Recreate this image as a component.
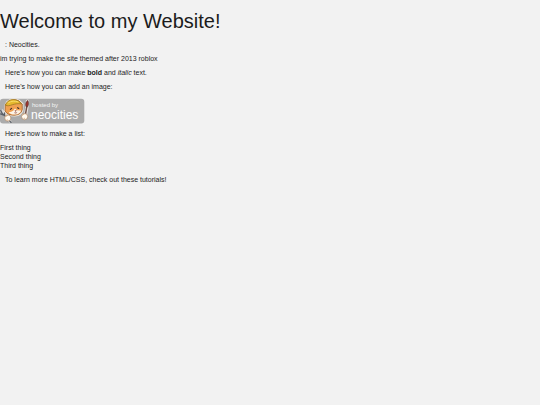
import type { ReactNode } from "react"

const things = ["First thing", "Second thing", "Third thing"]

function Paragraph({ children }: { children: ReactNode }) {
  return <p className="mb-[5px] px-[5px]">{children}</p>
}

function Badge() {
  return (
    <svg viewBox="0 0 85 26" className="block w-[85px] h-[26px]" role="img" aria-label="Hosted by Neocities">
      <rect x="0" y="0.8" width="84.3" height="24.8" rx="3" fill="#ababab" />

      {/* fork */}
      <path d="M1.5 12l4 5 5 7" fill="none" stroke="#d8d8d8" strokeWidth="3" strokeLinejoin="round" />
      <path d="M.8 12.5l1.6 3.2 2 1.2L5.2 13m-4.6 3l3.8 1.4L11 24.4" fill="none" stroke="#5b6067" strokeWidth="1.3" strokeLinecap="round" />

      {/* brush */}
      <path d="M27.5 3.2l-.8 7-1.2 7" fill="none" stroke="#e6dedc" strokeWidth="3.4" strokeLinecap="round" />
      <path d="M26.8 8.6l-1.4 8" fill="none" stroke="#705044" strokeWidth="1.4" />
      <path d="M26 8.6c-.7-2.9.1-5 1.8-6.1.9 2.1.8 4.4-.3 6.3z" fill="#a7352e" stroke="#4c2b27" strokeWidth=".7" />

      {/* head */}
      <path
        d="M4.6 13.2L5 7l2-3.4C10.5.8 16 .3 19.5 2.6l3.4 3.1-.1 6.3c-.9 3.9-3.9 5.7-8 5.8-5.3 0-8.8-1.6-10.2-4.6z"
        fill="#f0a050"
        stroke="#f4ede2"
        strokeWidth="1.2"
        strokeLinejoin="round"
      />
      <path
        d="M5 12.8L5.3 6.5l2.6-2.3C11 1.5 15.5 1 19 3.1l3.2 2.9.1 5.6c-.8 3.6-3.5 5.4-7.6 5.6-4.8.2-8.1-1.2-9.7-4.4z"
        fill="#f0a050"
        stroke="#8c562c"
        strokeWidth=".7"
      />
      <path d="M8.8 14.2c1.7 0 3.1-.8 4.4-1.4l1.8-2.2 1.6 1.6 4.5.4c-.4 2.4-2.6 3.9-5.8 4-3.2.1-5.5-.5-6.5-2.4z" fill="#fff4e6" />
      <path d="M5.4 7.2C7 3 10.2 1.4 13.8 1.6c3.2.2 5.9 1.6 7.6 4.3-3.4-.5-6.7 0-9.2.9-2.5.8-4.5 1.4-6.8.4z" fill="#e6b82e" stroke="#93701f" strokeWidth=".7" />
      <path d="M8.2 4.9c3.2-2 6.8-2.2 10.2-.9" fill="none" stroke="#f7dc66" strokeWidth="1" />
      <path d="M10.4 11.3l1.2-1m6-.6l1.2.8" stroke="#3e2b23" strokeWidth="1.1" strokeLinecap="round" />
      <path d="M14.8 12.7l1.5-.2-.6 1zM14.2 14.7c1.1.7 2.1.5 3-.3" fill="#ac4e41" stroke="#6e352c" strokeWidth=".4" />

      {/* paws */}
      <circle cx="7.8" cy="20" r="3.1" fill="#fffaf0" stroke="#a47a58" strokeWidth=".6" />
      <circle cx="24.6" cy="18.6" r="3.1" fill="#fffaf0" stroke="#a47a58" strokeWidth=".6" />
      <path d="M5.6 19c.5-1 1.3-1.5 2.4-1.5m-.8 5v-1.2M22.4 17.6c.4-.9 1.2-1.5 2.2-1.6m-.3 5v-1.2" fill="none" stroke="#d49962" strokeWidth=".7" />

      <text x="32" y="9" fontSize="6" fill="#f5f5f5" fontFamily="'Liberation Sans', Arial, sans-serif">
        hosted by
      </text>
      <text x="31" y="21" fontSize="12" fill="#fff" fontFamily="'Liberation Sans', Arial, sans-serif">
        neocities
      </text>
    </svg>
  )
}

export default function App() {
  return (
    <main className="min-h-screen bg-[#f2f2f2] pt-[9px] font-['Liberation_Sans',Arial,sans-serif] text-[7px] leading-[9px] text-[#1c1c1c]">
      <h1 className="mb-[7px] text-[20px] leading-[24px]">Welcome to my Website!</h1>
      <Paragraph>: Neocities.</Paragraph>
      <p className="mb-[5px]">im trying to make the site themed after 2013 roblox</p>
      <Paragraph>
        Here's how you can make <strong>bold</strong> and <em>italic</em> text.
      </Paragraph>
      <Paragraph>Here's how you can add an image:</Paragraph>
      <div className="mb-[5px] pt-[2px]">
        <Badge />
      </div>
      <Paragraph>Here's how to make a list:</Paragraph>
      <ul className="mb-[5px]">
        {things.map(thing => (
          <li key={thing}>{thing}</li>
        ))}
      </ul>
      <Paragraph>To learn more HTML/CSS, check out these tutorials!</Paragraph>
    </main>
  )
}
